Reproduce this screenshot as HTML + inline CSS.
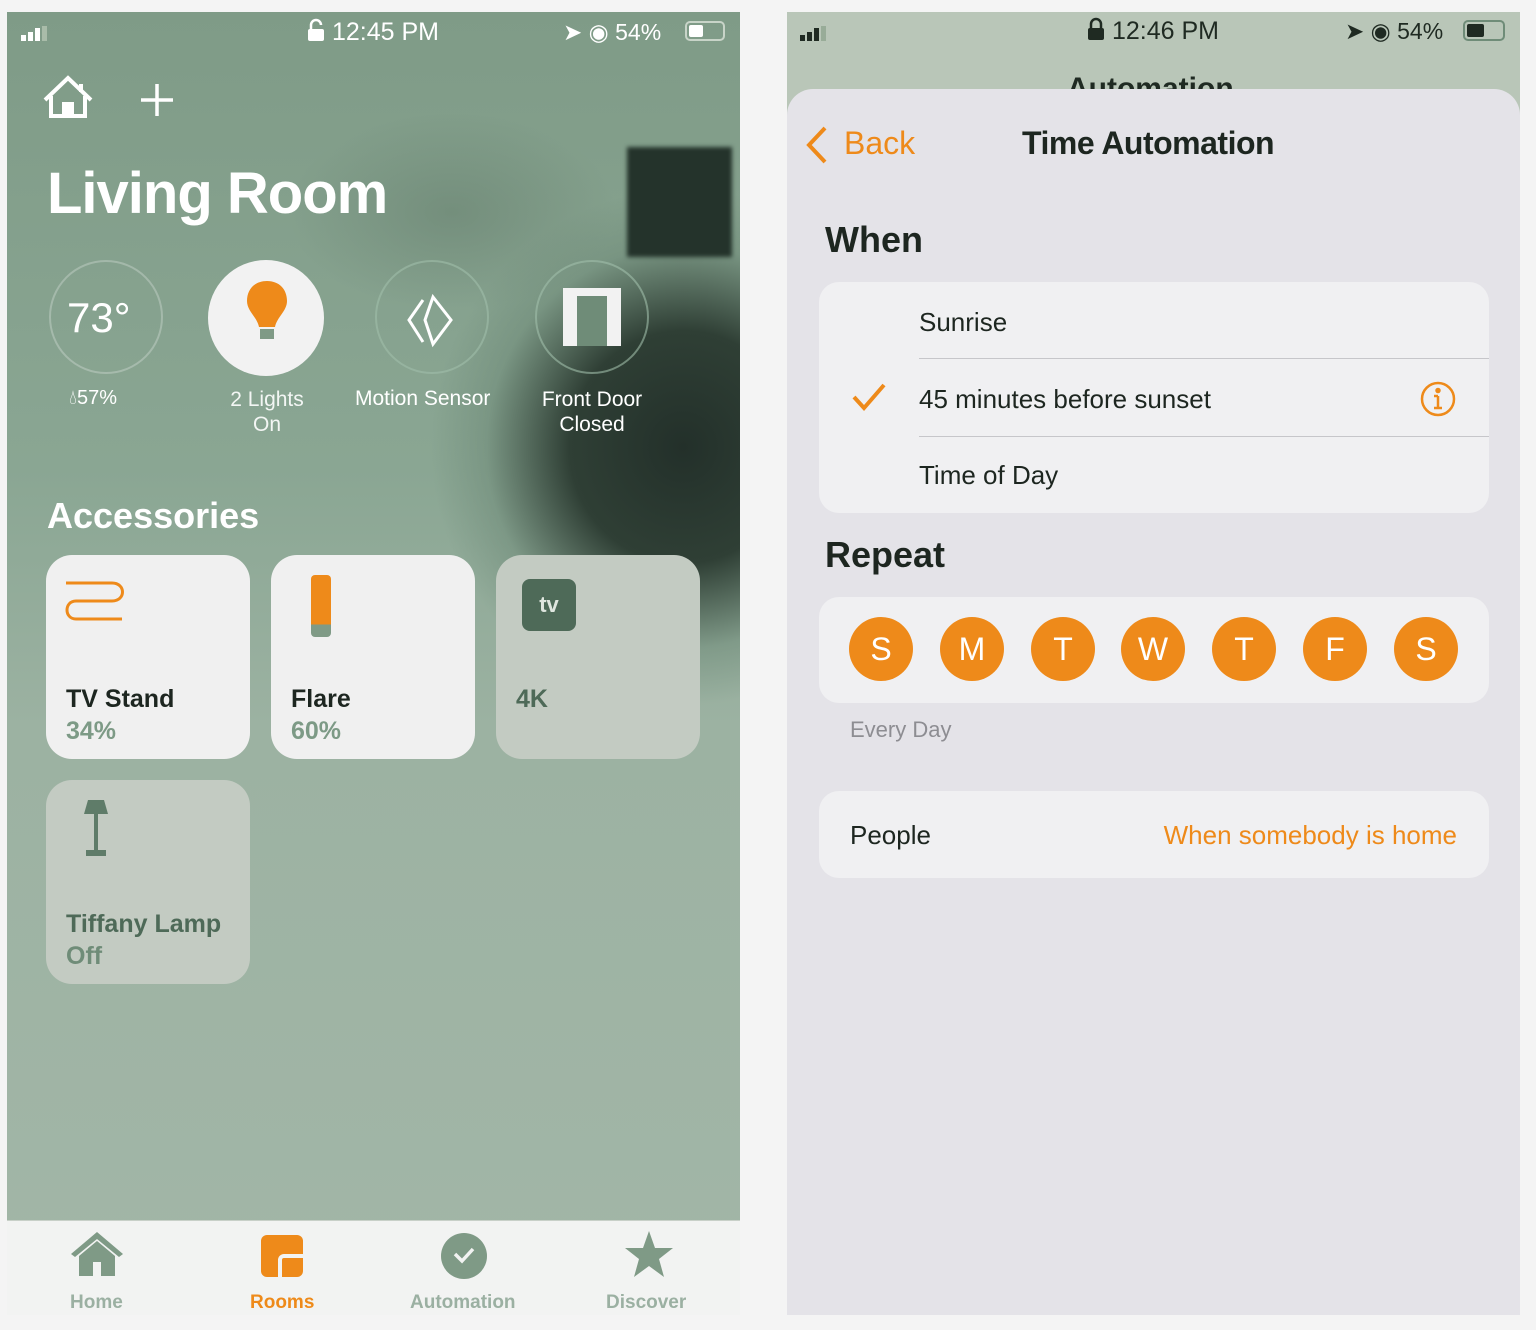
<!DOCTYPE html>
<html><head><meta charset="utf-8"><style>
*{margin:0;padding:0;box-sizing:border-box}
body{width:1536px;height:1330px;background:#f4f4f4;font-family:"Liberation Sans",sans-serif;position:relative;overflow:hidden}
.abs{position:absolute}
#L{left:7px;top:12px;width:733px;height:1303px;overflow:hidden;background:linear-gradient(180deg,#7f9b87 0%,#8aa693 35%,#9cb2a2 55%,#a2b6a7 100%)}
.w{color:#fff}
.tile{position:absolute;width:204px;height:204px;border-radius:26px;background:#f0f0f0}
.tile .n{position:absolute;left:20px;top:130px;font-weight:bold;font-size:25px;color:#1d2620}
.tile .s{position:absolute;left:20px;top:162px;font-weight:bold;font-size:25px;color:#7d9a86}
#R{left:787px;top:12px;width:733px;height:1303px;background:#b9c6b8;overflow:hidden}
#sheet{position:absolute;left:0;top:77px;width:733px;height:1240px;background:#e4e3e8;border-radius:26px 26px 0 0}
.card{position:absolute;left:32px;width:670px;background:#f0f0f2;border-radius:20px}
.day{position:absolute;top:20px;width:64px;height:64px;border-radius:50%;background:#ee8a1a;color:#fff;font-size:32px;text-align:center;line-height:64px}
</style></head><body>
<div id="L" class="abs">
  <div class="abs" style="left:200px;top:40px;width:700px;height:760px;background:radial-gradient(ellipse 36% 34% at 68% 52%,#23302a 0%,#2f3f35 45%,rgba(110,138,120,.55) 78%,rgba(127,155,135,0) 100%)"></div>
  <div class="abs" style="left:280px;top:100px;width:330px;height:200px;background:radial-gradient(ellipse at 50% 50%,rgba(100,125,108,.5),rgba(127,155,135,0) 70%)"></div>
  <div class="abs" style="left:620px;top:135px;width:105px;height:110px;background:#24332b;filter:blur(2px)"></div>
  <!-- status -->
  <svg class="abs" style="left:14px;top:14px" width="30" height="16"><rect x="0" y="9" width="5" height="6" fill="#fff"/><rect x="7" y="6" width="5" height="9" fill="#fff"/><rect x="14" y="2" width="5" height="13" fill="#fff"/><rect x="21" y="0" width="5" height="15" fill="#a9bca9"/></svg>
  <svg class="abs" style="left:300px;top:6px" width="18" height="24" fill="#fff"><rect x="1" y="11" width="16" height="12" rx="2"/><path d="M4 11V7a5 5 0 0 1 10 0" stroke="#fff" stroke-width="2.5" fill="none"/></svg>
  <div class="abs w" style="left:325px;top:6px;font-size:25px">12:45 PM</div>
  <div class="abs w" style="left:556px;top:7px;font-size:23px">➤ ◉ 54%</div>
  <div class="abs" style="left:678px;top:9px;width:40px;height:20px;border:2px solid #c8d4c8;border-radius:5px"><div style="margin:2px;width:14px;height:12px;background:#fff;border-radius:2px"></div></div>
  <svg class="abs" style="left:34px;top:62px" width="56" height="46" fill="none" stroke="#fff" stroke-width="4"><path d="M4 26 L27 4 L50 26 M10 22 V42 H44 V22 M40 10 V18"/><rect x="23" y="30" width="8" height="12" fill="#fff"/></svg>
  <svg class="abs" style="left:130px;top:68px" width="40" height="40" stroke="#fff" stroke-width="3.5"><path d="M20 4V36M4 20H36"/></svg>
  <div class="abs w" style="left:40px;top:148px;font-size:58px;font-weight:bold;letter-spacing:-1px">Living Room</div>
  <div class="abs" style="left:42px;top:248px;width:114px;height:114px;border-radius:50%;border:2px solid rgba(255,255,255,.25)"></div>
  <div class="abs w" style="left:60px;top:282px;font-size:42px">73°</div>
  <div class="abs w" style="left:62px;top:375px;font-size:20px">💧︎57%</div>
  <div class="abs" style="left:201px;top:248px;width:116px;height:116px;border-radius:50%;background:#f2f2f2"></div>
  <svg class="abs" style="left:236px;top:265px" width="48" height="70"><path d="M24 4C36 4 44 12 44 24C44 34 34 40 32 50H16C14 40 4 34 4 24C4 12 12 4 24 4Z" fill="#ee8a1a"/><rect x="17" y="52" width="14" height="10" fill="#7f9a86"/></svg>
  <div class="abs w" style="left:218px;top:375px;font-size:21px;text-align:center;width:84px;line-height:25px;opacity:.9">2 Lights<br>On</div>
  <div class="abs" style="left:368px;top:248px;width:114px;height:114px;border-radius:50%;border:2px solid rgba(160,190,170,.6)"></div>
  <svg class="abs" style="left:398px;top:280px" width="60" height="60" fill="none" stroke="#fff" stroke-width="3"><path d="M28 5L46 28L28 52L20 28Z M18 8L4 28L18 50"/></svg>
  <div class="abs w" style="left:348px;top:375px;font-size:21px">Motion Sensor</div>
  <div class="abs" style="left:528px;top:248px;width:114px;height:114px;border-radius:50%;border:2px solid rgba(160,190,170,.6)"></div>
  <div class="abs" style="left:556px;top:276px;width:58px;height:58px;background:#f2f2f2"><div style="margin:8px 0 0 14px;width:30px;height:50px;background:#6f8c78"></div></div>
  <div class="abs w" style="left:526px;top:375px;font-size:21px;text-align:center;width:118px;line-height:25px">Front Door<br>Closed</div>
  <div class="abs w" style="left:40px;top:483px;font-size:36px;font-weight:bold">Accessories</div>
  <div class="tile" style="left:39px;top:543px"><svg class="abs" style="left:18px;top:24px" width="64" height="48" fill="none" stroke="#ee8a1a" stroke-width="3"><path d="M2 4H48C62 4 62 22 48 22H12C0 22 0 40 12 40H58"/></svg><div class="n">TV Stand</div><div class="s">34%</div></div>
  <div class="tile" style="left:264px;top:543px"><div class="abs" style="left:40px;top:20px;width:20px;height:62px;border-radius:4px;background:linear-gradient(#ee8a1a 80%,#7f9a86 80%)"></div><div class="n">Flare</div><div class="s">60%</div></div>
  <div class="tile" style="left:489px;top:543px;background:#c3cbc2"><div class="abs" style="left:26px;top:24px;width:54px;height:52px;border-radius:8px;background:#4e6a58;color:#dfe6df;font-weight:bold;font-size:22px;text-align:center;line-height:52px"> tv</div><div class="n" style="color:#4e6a58">4K</div></div>
  <div class="tile" style="left:39px;top:768px;background:#c3cbc2"><svg class="abs" style="left:36px;top:18px" width="30" height="62" fill="#5f7c69"><path d="M6 2H22L26 16H2Z"/><rect x="12" y="16" width="4" height="38"/><rect x="4" y="52" width="20" height="6"/></svg><div class="n" style="color:#4e6a58">Tiffany Lamp</div><div class="s" style="color:#6f8c78">Off</div></div>
  <!-- tab -->
  <div class="abs" style="left:0;top:1208px;width:733px;height:95px;background:#f2f3f2;border-top:1px solid #c8d0c8"></div>
  <svg class="abs" style="left:62px;top:1218px" width="56" height="48" fill="#7f9a86"><path d="M2 24L28 2L54 24L50 27L28 9L6 27Z"/><path d="M10 26L28 11L46 26V46H10Z"/><rect x="24" y="32" width="8" height="14" fill="#f2f3f2"/></svg>
  <div class="abs" style="left:63px;top:1280px;font-size:19px;font-weight:bold;color:#9bb0a2">Home</div>
  <svg class="abs" style="left:253px;top:1222px" width="44" height="46"><rect x="1" y="1" width="42" height="42" rx="6" fill="#ee8a1a"/><path d="M20 43V26a4 4 0 0 1 4-4H43" stroke="#f2f3f2" stroke-width="4" fill="none"/></svg>
  <div class="abs" style="left:243px;top:1280px;font-size:19px;font-weight:bold;color:#ee8a1a">Rooms</div>
  <svg class="abs" style="left:432px;top:1220px" width="50" height="50"><circle cx="25" cy="24" r="23" fill="#7f9a86"/><path d="M16 22L23 29L34 17" stroke="#f2f3f2" stroke-width="3.5" fill="none"/></svg>
  <div class="abs" style="left:403px;top:1280px;font-size:19px;font-weight:bold;color:#9bb0a2">Automation</div>
  <svg class="abs" style="left:616px;top:1218px" width="52" height="50" fill="#7f9a86"><path d="M26 1L32 18H50L36 29L41 47L26 36L11 47L16 29L2 18H20Z"/></svg>
  <div class="abs" style="left:599px;top:1280px;font-size:19px;font-weight:bold;color:#9bb0a2">Discover</div>
</div>

<div id="R" class="abs">
  <svg class="abs" style="left:13px;top:14px" width="30" height="16"><rect x="0" y="9" width="5" height="6" fill="#1f2a22"/><rect x="7" y="6" width="5" height="9" fill="#1f2a22"/><rect x="14" y="2" width="5" height="13" fill="#1f2a22"/><rect x="21" y="0" width="5" height="15" fill="#98ac98"/></svg>
  <svg class="abs" style="left:300px;top:5px" width="18" height="24" fill="#1f2a22"><rect x="1" y="11" width="16" height="12" rx="2"/><path d="M4 11V7a5 5 0 0 1 10 0V11" stroke="#1f2a22" stroke-width="2.5" fill="none"/></svg>
  <div class="abs" style="left:325px;top:5px;font-size:25px;color:#1f2a22">12:46 PM</div>
  <div class="abs" style="left:558px;top:6px;font-size:23px;color:#1f2a22">➤ ◉ 54%</div>
  <div class="abs" style="left:676px;top:8px;width:42px;height:21px;border:2px solid #6f8c78;border-radius:5px"><div style="margin:2px;width:17px;height:13px;background:#1f2a22;border-radius:2px"></div></div>
  <div class="abs" style="left:280px;top:60px;font-size:30px;font-weight:bold;color:#1f2a22">Automation</div>
  <div id="sheet">
    <svg class="abs" style="left:18px;top:36px" width="24" height="40" fill="none" stroke="#ee8a1a" stroke-width="4"><path d="M20 3L4 20L20 37"/></svg>
    <div class="abs" style="left:57px;top:36px;font-size:32px;color:#ee8a1a">Back</div>
    <div class="abs" style="left:235px;top:36px;font-size:32px;color:#1d2620;font-weight:bold;letter-spacing:-0.5px">Time Automation</div>
    <div class="abs" style="left:38px;top:130px;font-size:36px;font-weight:bold;color:#1d2620">When</div>
    <div class="card" style="top:193px;height:231px">
      <div class="abs" style="left:100px;top:25px;font-size:26px;color:#1d2620">Sunrise</div>
      <div class="abs" style="left:100px;top:76px;width:570px;height:1px;background:#c6c6ca"></div>
      <svg class="abs" style="left:32px;top:100px" width="36" height="30" fill="none" stroke="#ee8a1a" stroke-width="4"><path d="M3 15L13 26L33 3"/></svg>
      <div class="abs" style="left:100px;top:102px;font-size:26px;color:#1d2620">45 minutes before sunset</div>
      <svg class="abs" style="left:600px;top:98px" width="38" height="38" fill="none" stroke="#ee8a1a" stroke-width="2.5"><circle cx="19" cy="19" r="16"/><path d="M19 16V28M15 28H23M15 16H19"/><circle cx="19" cy="10.5" r="1.5" fill="#ee8a1a"/></svg>
      <div class="abs" style="left:100px;top:154px;width:570px;height:1px;background:#c6c6ca"></div>
      <div class="abs" style="left:100px;top:178px;font-size:26px;color:#1d2620">Time of Day</div>
    </div>
    <div class="abs" style="left:38px;top:445px;font-size:36px;font-weight:bold;color:#1d2620">Repeat</div>
    <div class="card" style="top:508px;height:106px">
      <div class="day" style="left:30px">S</div><div class="day" style="left:121px">M</div><div class="day" style="left:212px">T</div><div class="day" style="left:302px">W</div><div class="day" style="left:393px">T</div><div class="day" style="left:484px">F</div><div class="day" style="left:575px">S</div>
    </div>
    <div class="abs" style="left:63px;top:628px;font-size:22px;color:#8d8d92">Every Day</div>
    <div class="card" style="top:702px;height:87px">
      <div class="abs" style="left:31px;top:29px;font-size:26px;color:#1d2620">People</div>
      <div class="abs" style="right:32px;top:29px;font-size:26px;color:#ee8a1a">When somebody is home</div>
    </div>
  </div>
</div>
</body></html>
